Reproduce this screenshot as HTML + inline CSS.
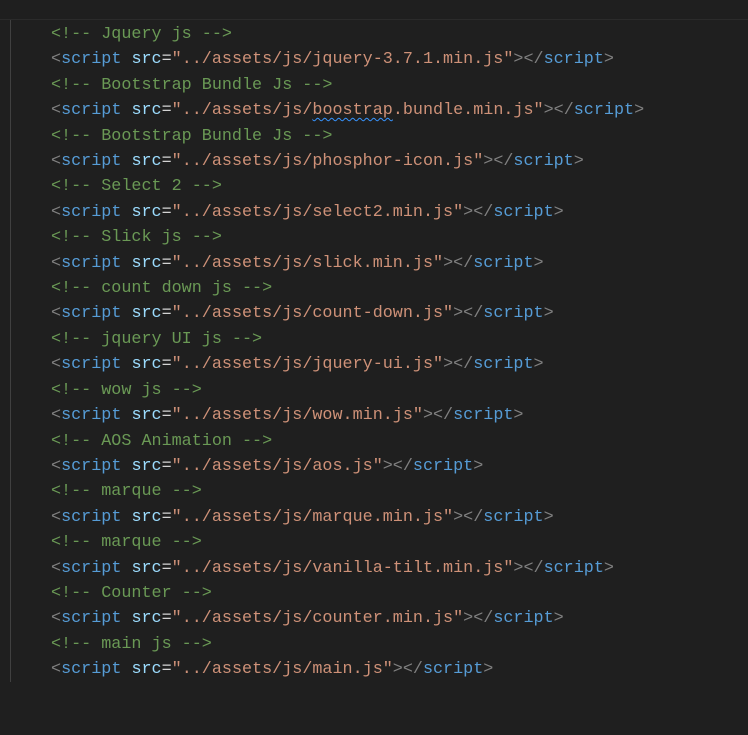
<!DOCTYPE html>
<html><head><meta charset="utf-8"><style>
html,body{margin:0;padding:0;background:#1f1f1f;width:748px;height:735px;overflow:hidden}
.top{position:absolute;left:0;top:0;width:748px;height:19px;background:#1f1f1f;border-bottom:1px solid #2b2b2b}
.guide{position:absolute;left:10px;top:20px;width:1px;height:662px;background:#404040}
pre{position:absolute;left:51px;top:22px;margin:0;font-family:"Liberation Mono",monospace;font-size:16.75px;line-height:25.4px;color:#d4d4d4}
.c{color:#6a9955}.b{color:#808080}.t{color:#569cd6}.a{color:#9cdcfe}.s{color:#ce9178}
.u{text-decoration:underline wavy #3794ff;text-decoration-thickness:1px;text-underline-offset:3px}
</style></head><body>
<div class="top"></div><div class="guide"></div>
<pre><span class="c">&lt;!-- Jquery js --&gt;</span>
<span class="b">&lt;</span><span class="t">script</span> <span class="a">src</span>=<span class="s">"../assets/js/jquery-3.7.1.min.js"</span><span class="b">&gt;&lt;/</span><span class="t">script</span><span class="b">&gt;</span>
<span class="c">&lt;!-- Bootstrap Bundle Js --&gt;</span>
<span class="b">&lt;</span><span class="t">script</span> <span class="a">src</span>=<span class="s">"../assets/js/<span class="u">boostrap</span>.bundle.min.js"</span><span class="b">&gt;&lt;/</span><span class="t">script</span><span class="b">&gt;</span>
<span class="c">&lt;!-- Bootstrap Bundle Js --&gt;</span>
<span class="b">&lt;</span><span class="t">script</span> <span class="a">src</span>=<span class="s">"../assets/js/phosphor-icon.js"</span><span class="b">&gt;&lt;/</span><span class="t">script</span><span class="b">&gt;</span>
<span class="c">&lt;!-- Select 2 --&gt;</span>
<span class="b">&lt;</span><span class="t">script</span> <span class="a">src</span>=<span class="s">"../assets/js/select2.min.js"</span><span class="b">&gt;&lt;/</span><span class="t">script</span><span class="b">&gt;</span>
<span class="c">&lt;!-- Slick js --&gt;</span>
<span class="b">&lt;</span><span class="t">script</span> <span class="a">src</span>=<span class="s">"../assets/js/slick.min.js"</span><span class="b">&gt;&lt;/</span><span class="t">script</span><span class="b">&gt;</span>
<span class="c">&lt;!-- count down js --&gt;</span>
<span class="b">&lt;</span><span class="t">script</span> <span class="a">src</span>=<span class="s">"../assets/js/count-down.js"</span><span class="b">&gt;&lt;/</span><span class="t">script</span><span class="b">&gt;</span>
<span class="c">&lt;!-- jquery UI js --&gt;</span>
<span class="b">&lt;</span><span class="t">script</span> <span class="a">src</span>=<span class="s">"../assets/js/jquery-ui.js"</span><span class="b">&gt;&lt;/</span><span class="t">script</span><span class="b">&gt;</span>
<span class="c">&lt;!-- wow js --&gt;</span>
<span class="b">&lt;</span><span class="t">script</span> <span class="a">src</span>=<span class="s">"../assets/js/wow.min.js"</span><span class="b">&gt;&lt;/</span><span class="t">script</span><span class="b">&gt;</span>
<span class="c">&lt;!-- AOS Animation --&gt;</span>
<span class="b">&lt;</span><span class="t">script</span> <span class="a">src</span>=<span class="s">"../assets/js/aos.js"</span><span class="b">&gt;&lt;/</span><span class="t">script</span><span class="b">&gt;</span>
<span class="c">&lt;!-- marque --&gt;</span>
<span class="b">&lt;</span><span class="t">script</span> <span class="a">src</span>=<span class="s">"../assets/js/marque.min.js"</span><span class="b">&gt;&lt;/</span><span class="t">script</span><span class="b">&gt;</span>
<span class="c">&lt;!-- marque --&gt;</span>
<span class="b">&lt;</span><span class="t">script</span> <span class="a">src</span>=<span class="s">"../assets/js/vanilla-tilt.min.js"</span><span class="b">&gt;&lt;/</span><span class="t">script</span><span class="b">&gt;</span>
<span class="c">&lt;!-- Counter --&gt;</span>
<span class="b">&lt;</span><span class="t">script</span> <span class="a">src</span>=<span class="s">"../assets/js/counter.min.js"</span><span class="b">&gt;&lt;/</span><span class="t">script</span><span class="b">&gt;</span>
<span class="c">&lt;!-- main js --&gt;</span>
<span class="b">&lt;</span><span class="t">script</span> <span class="a">src</span>=<span class="s">"../assets/js/main.js"</span><span class="b">&gt;&lt;/</span><span class="t">script</span><span class="b">&gt;</span></pre>
</body></html>
